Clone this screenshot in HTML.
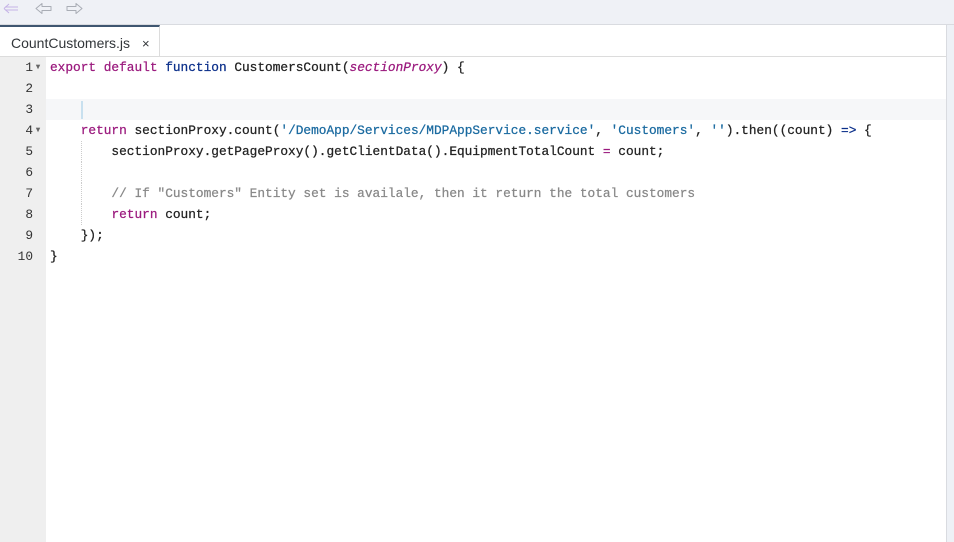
<!DOCTYPE html>
<html><head><style>
body{margin:0;width:954px;height:542px;overflow:hidden;background:#fff;font-family:"Liberation Sans",sans-serif;position:relative}
#tb{position:absolute;left:0;top:0;width:954px;height:24px;background:#eff1f6;border-bottom:1px solid #d9dbe0}
#tabs{position:absolute;left:0;top:25px;width:946px;height:31px;background:#fff;border-bottom:1px solid #dcdcdc}
#tab{position:absolute;left:0;top:0;width:160px;height:31px;border-top:2px solid #3f5670;box-sizing:border-box;border-right:1px solid #dcdcdc;font-size:14px;color:#32363a;padding:8px 0 0 11px}
#sb{position:absolute;left:946px;top:25px;width:8px;height:517px;background:#eef1f6;border-left:1px solid #d9dbe0}
#gut{position:absolute;left:0;top:57px;width:46px;height:485px;background:#efefef}
#code{position:absolute;left:0;top:57px;width:946px}
.l{position:relative;height:21px;line-height:21px;font-family:"Liberation Mono",monospace;font-size:12.8px;color:#222;-webkit-text-stroke:0.25px}
.n{position:absolute;left:0;width:33px;text-align:right;color:#333;-webkit-text-stroke:0}
.f{position:absolute;left:36px;top:0;font-size:8px;color:#666}
.c{position:absolute;left:50px;white-space:pre}
.k{color:#9b1a7e}.b{color:#0b2f8a}.s{color:#1a6aa0}.m{color:#888}.i{color:#9b1a7e;font-style:italic}
.g{position:absolute;left:81px;width:0;border-left:1px dotted #ccc;height:21px}
</style></head><body>
<div id="tb"><svg width="100" height="20" style="position:absolute;left:0;top:0" fill="none" stroke-width="1">
<path d="M4 8.5L9 4M4 8.5L9 13M5 7H18M5 10H18" stroke="#c5b3e6"/>
<path d="M36 8.5L42 3.5V6.5H51V10.5H42V13.5Z" stroke="#a9adb5" stroke-linejoin="round"/>
<path d="M82 8.5L76 3.5V6.5H67V10.5H76V13.5Z" stroke="#a9adb5" stroke-linejoin="round"/></svg></div>
<div id="tabs"><div id="tab">CountCustomers.js <span style="margin-left:8px;font-size:13px">×</span></div></div>
<div id="sb"></div>
<div id="gut"></div>
<div id="code">
<div class="l"><span class="n">1</span><span class="f">▾</span><span class="c"><span class="k">export default</span> <span class="b">function</span> CustomersCount(<span class="i">sectionProxy</span>) {</span></div>
<div class="l"><span class="n">2</span></div>
<div class="l" style="background:#f6f7f9"><span class="n" style="background:#efefef;width:46px;text-align:left"><span style="display:inline-block;width:33px;text-align:right">3</span></span><span style="position:absolute;left:81px;top:2px;width:2px;height:18px;background:#c8e0ef"></span></div>
<div class="l"><span class="n">4</span><span class="f">▾</span><span class="c">    <span class="k">return</span> sectionProxy.count(<span class="s">'/DemoApp/Services/MDPAppService.service'</span>, <span class="s">'Customers'</span>, <span class="s">''</span>).then((count) <span class="b">=&gt;</span> {</span></div>
<div class="l"><span class="n">5</span><span class="g"></span><span class="c">        sectionProxy.getPageProxy().getClientData().EquipmentTotalCount <span class="k">=</span> count;</span></div>
<div class="l"><span class="n">6</span><span class="g"></span></div>
<div class="l"><span class="n">7</span><span class="g"></span><span class="c m">        // If "Customers" Entity set is availale, then it return the total customers</span></div>
<div class="l"><span class="n">8</span><span class="g"></span><span class="c">        <span class="k">return</span> count;</span></div>
<div class="l"><span class="n">9</span><span class="c">    });</span></div>
<div class="l"><span class="n">10</span><span class="c">}</span></div>
</div>
</body></html>
